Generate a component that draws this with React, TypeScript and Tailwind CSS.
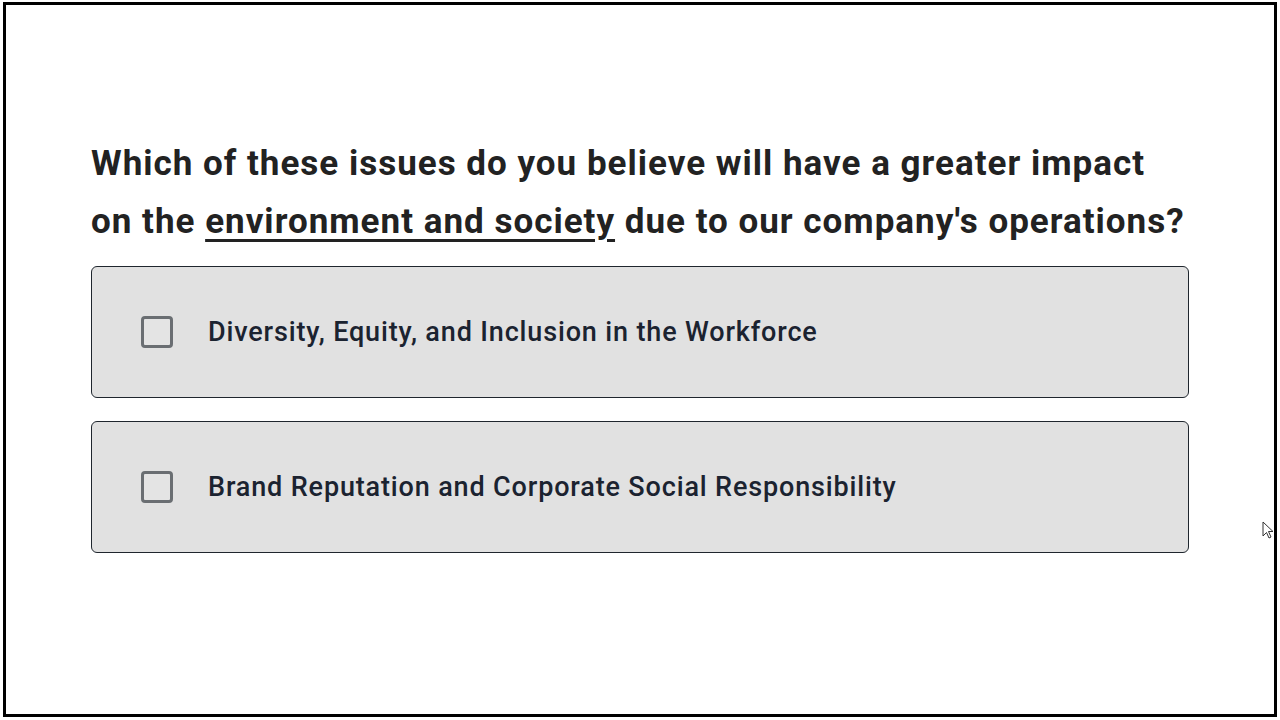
import React from 'react';

const options = [
  'Diversity, Equity, and Inclusion in the Workforce',
  'Brand Reputation and Corporate Social Responsibility',
];

function Cursor() {
  return (
    <svg className="absolute left-[1262px] top-[521px]" width="12" height="19" viewBox="0 0 12 19">
      <path d="M1 1 L1 15 L4.5 11.5 L7 17 L9 16 L6.5 10.5 L11 10.5 Z" fill="white" stroke="#333" strokeWidth="1" />
    </svg>
  );
}

export default function App() {
  return (
    <div className="relative w-[1280px] h-[720px] bg-white pl-[3px] pt-[2px] pr-[3px] pb-[3px]" style={{ fontFamily: 'Roboto, "Liberation Sans", sans-serif' }}>
      <div className="h-full border-[3px] border-black pl-[85px] pt-[130px]">
        <h1 className="text-[35px] font-bold tracking-[1px] leading-[58px] text-[#222] mb-[15px] w-[1120px] whitespace-nowrap">
          Which of these issues do you believe will have a greater impact
          <br />
          on the{' '}
          <span className="underline decoration-[3px] underline-offset-[6px]">environment and society</span> due to our company's operations?
        </h1>
        <div className="flex flex-col gap-[23px] w-[1098px]">
          {options.map((o) => (
            <label
              key={o}
              className="flex items-center h-[132px] rounded-[6px] border border-[#1f262e] bg-[#e1e1e1] pl-[49px] cursor-pointer"
            >
              <span className="w-[32px] h-[32px] rounded-[4px] border-[3px] border-[#6a6e72] bg-[#e4e4e4]" />
              <span className="ml-[35px] text-[27px] font-medium tracking-[0.85px] text-[#1b2330]">{o}</span>
            </label>
          ))}
        </div>
      </div>
      <Cursor />
    </div>
  );
}
